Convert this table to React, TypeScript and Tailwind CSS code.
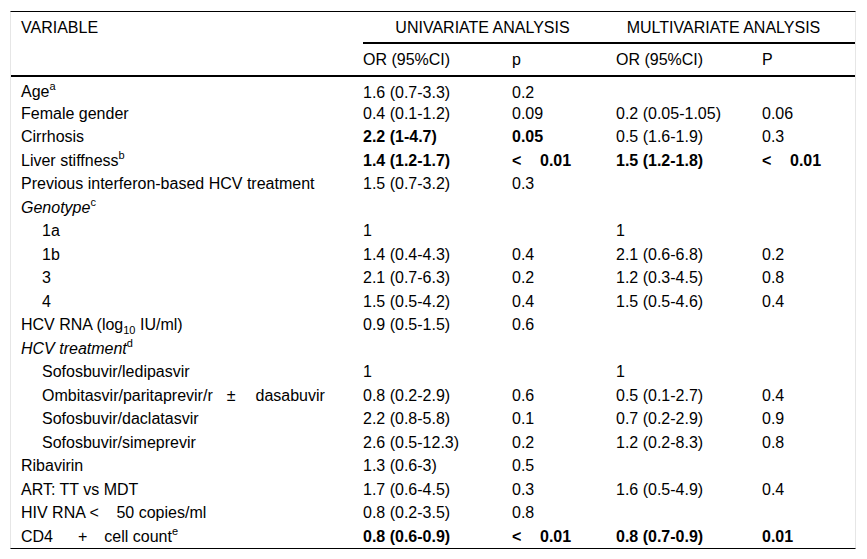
import React from "react";

type Cell = React.ReactNode;
type Row = { label: Cell; indent?: boolean; cells: [Cell, Cell, Cell, Cell]; bold?: [boolean, boolean, boolean, boolean] };

const Lt = () => (
  <>
    <span className="inline-block w-[28px]">&lt;</span>0.01
  </>
);

const Sup = ({ c }: { c: string }) => (
  <sup className="relative top-[-1px] text-[11px] leading-none align-super">{c}</sup>
);

const rows: Row[] = [
  { label: <>Age<Sup c="a" /></>, cells: ["1.6 (0.7-3.3)", "0.2", "", ""] },
  { label: "Female gender", cells: ["0.4 (0.1-1.2)", "0.09", "0.2 (0.05-1.05)", "0.06"] },
  { label: "Cirrhosis", cells: ["2.2 (1-4.7)", "0.05", "0.5 (1.6-1.9)", "0.3"], bold: [true, true, false, false] },
  { label: <>Liver stiffness<Sup c="b" /></>, cells: ["1.4 (1.2-1.7)", <Lt />, "1.5 (1.2-1.8)", <Lt />], bold: [true, true, true, true] },
  { label: "Previous interferon-based HCV treatment", cells: ["1.5 (0.7-3.2)", "0.3", "", ""] },
  { label: <><i>Genotype</i><Sup c="c" /></>, cells: ["", "", "", ""] },
  { label: "1a", indent: true, cells: ["1", "", "1", ""] },
  { label: "1b", indent: true, cells: ["1.4 (0.4-4.3)", "0.4", "2.1 (0.6-6.8)", "0.2"] },
  { label: "3", indent: true, cells: ["2.1 (0.7-6.3)", "0.2", "1.2 (0.3-4.5)", "0.8"] },
  { label: "4", indent: true, cells: ["1.5 (0.5-4.2)", "0.4", "1.5 (0.5-4.6)", "0.4"] },
  {
    label: (
      <>
        HCV RNA (log<sub className="relative top-[4px] text-[11px] leading-none align-baseline">10</sub> IU/ml)
      </>
    ),
    cells: ["0.9 (0.5-1.5)", "0.6", "", ""],
  },
  { label: <><i>HCV treatment</i><Sup c="d" /></>, cells: ["", "", "", ""] },
  { label: "Sofosbuvir/ledipasvir", indent: true, cells: ["1", "", "1", ""] },
  {
    label: (
      <>
        Ombitasvir/paritaprevir/r<span className="inline-block w-[14px]" />±<span className="inline-block w-[20px]" />dasabuvir
      </>
    ),
    indent: true,
    cells: ["0.8 (0.2-2.9)", "0.6", "0.5 (0.1-2.7)", "0.4"],
  },
  { label: "Sofosbuvir/daclatasvir", indent: true, cells: ["2.2 (0.8-5.8)", "0.1", "0.7 (0.2-2.9)", "0.9"] },
  { label: "Sofosbuvir/simeprevir", indent: true, cells: ["2.6 (0.5-12.3)", "0.2", "1.2 (0.2-8.3)", "0.8"] },
  { label: "Ribavirin", cells: ["1.3 (0.6-3)", "0.5", "", ""] },
  { label: "ART: TT vs MDT", cells: ["1.7 (0.6-4.5)", "0.3", "1.6 (0.5-4.9)", "0.4"] },
  {
    label: (
      <>
        HIV RNA <span className="inline-block w-[27px]">&lt;</span>50 copies/ml
      </>
    ),
    cells: ["0.8 (0.2-3.5)", "0.8", "", ""],
  },
  {
    label: (
      <>
        CD4<span className="inline-block w-[25px]" />+<span className="inline-block w-[17px]" />cell count<Sup c="e" />
      </>
    ),
    cells: ["0.8 (0.6-0.9)", <Lt />, "0.8 (0.7-0.9)", "0.01"],
    bold: [true, true, true, true],
  },
];

export default function App() {
  return (
    <div
      className="min-h-[559px] w-[867px] bg-white pl-[10px] pt-[11px] text-black"
      style={{ fontFamily: '"Liberation Sans", Arial, sans-serif' }}
    >
      <div className="w-[846px] border-x border-[#e6e6e6] border-t border-b border-t-black border-b-black">
        <table className="w-[844px] table-fixed border-separate border-spacing-0 text-[16px] leading-[19px]">
          <colgroup>
            <col className="w-[352px]" />
            <col className="w-[149px]" />
            <col className="w-[104px]" />
            <col className="w-[146px]" />
            <col className="w-[93px]" />
          </colgroup>
          <thead>
            <tr className="h-[32px]">
              <th rowSpan={2} className="border-b-2 border-black pl-[10px] pt-[6px] text-left align-top font-normal">
                VARIABLE
              </th>
              <th colSpan={2} className="border-b-2 border-black pr-[14px] text-center font-normal">
                UNIVARIATE ANALYSIS
              </th>
              <th colSpan={2} className="border-b-2 border-black pr-[24px] text-center font-normal">
                MULTIVARIATE ANALYSIS
              </th>
            </tr>
            <tr className="h-[33px]">
              <th className="border-b-2 border-black text-left font-normal">OR (95%CI)</th>
              <th className="border-b-2 border-black text-left font-normal">p</th>
              <th className="border-b-2 border-black text-left font-normal">OR (95%CI)</th>
              <th className="border-b-2 border-black text-left font-normal">P</th>
            </tr>
          </thead>
          <tbody>
            {rows.map((r, i) => (
              <tr key={i} className={i === 0 ? "h-[24.5px] align-bottom" : "h-[23.5px]"}>
                <td className={r.indent ? "pl-[31px] whitespace-nowrap" : "pl-[10px] whitespace-nowrap"}>{r.label}</td>
                {r.cells.map((c, j) => (
                  <td key={j} className={r.bold && r.bold[j] ? "font-bold whitespace-nowrap" : "whitespace-nowrap"}>
                    {c}
                  </td>
                ))}
              </tr>
            ))}
          </tbody>
        </table>
      </div>
    </div>
  );
}
